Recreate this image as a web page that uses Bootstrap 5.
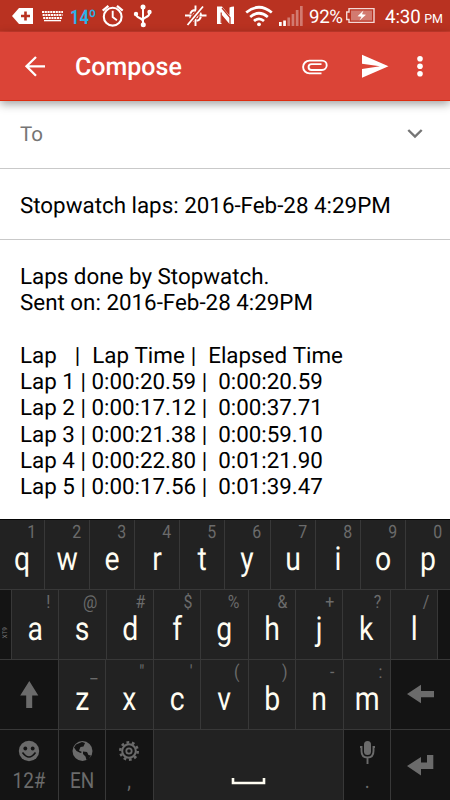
<!DOCTYPE html>
<html lang="en">
<head>
<meta charset="utf-8">
<meta name="viewport" content="width=device-width, initial-scale=1">
<title>Compose</title>
<link href="https://cdn.jsdelivr.net/npm/bootstrap@5.3.0/dist/css/bootstrap.min.css" rel="stylesheet">
<style>
body{font-family:Roboto,"Liberation Sans",sans-serif;width:450px;height:800px;color:#000;background:#fff;text-rendering:geometricPrecision}
svg{display:block;flex:none}
.status-bar{height:32px;background:#b93221;border-bottom:1px solid #c83b2c;color:#fff;font-size:18.7px;line-height:34px;white-space:nowrap}
.temp{color:#2cb1e8;font-size:20px;font-weight:700;width:33px;padding-left:8px;transform:scaleX(.82);transform-origin:8px 50%;line-height:35px}
.pct{width:38px;padding-left:7px;letter-spacing:-.35px}
.clock{padding-left:10px;letter-spacing:-.1px}
.clock small{font-size:12.5px;margin-left:-1px}
.app-bar{height:69px;background:#db4437;border-bottom:1px solid #dd2c10;color:#fff;box-shadow:0 3px 9px rgba(0,0,0,.38);z-index:1}
.app-title{font-size:25px;font-weight:500;line-height:30px;width:226px;padding:4px 0 0 27px}
.to-row{height:68px;border-bottom:1px solid #c9c9c9;color:#757575;font-size:20.5px;padding:0 25px 0 20px}
.to-row span{padding-top:2px}
.subject{height:71px;border-bottom:1px solid #c9c9c9;font-size:22.36px;padding:5px 20px 0}
.message{height:279px;font-size:22.36px;line-height:26.28px;padding:24px 20px 0;white-space:pre;overflow:hidden}
.lap-head{word-spacing:.45px}
.keyboard{height:281px;background:#222;border-top:1px solid #050505}
.krow{height:70px;border-bottom:1px solid #383838}
.krow:last-child{border:0;height:70px}
.key{flex:1 1 0;min-width:0;border-right:1px solid #383838;color:#fffdf2}
.key:last-child{border-right:0}
.fn{background:#141414;color:#6b6b6b}
.w-side{flex:0 0 12px}
.w-mod{flex:0 0 59px}
.w-del{flex:0 0 59px}
.w-one{flex:0 0 47.4px}
.hint{font-size:18.3px;line-height:26px;height:25px;color:#6b6b6b;text-align:right;padding-right:8px;transform:scaleX(.87);transform-origin:calc(100% - 8px) 50%}
.letter{font-size:33px;line-height:30px;text-align:center;transform:scaleX(.86)}
.tag{font-size:22px;line-height:28px;text-align:center;transform:scaleX(.86)}
.xt{font-size:6.5px;writing-mode:vertical-rl;transform:rotate(180deg);line-height:11px;margin-top:17px;color:#777}
</style>
<script src="https://cdn.jsdelivr.net/npm/bootstrap@5.3.0/dist/js/bootstrap.bundle.min.js"></script>
</head>
<body class="d-flex flex-column overflow-hidden">
<div class="status-bar d-flex flex-shrink-0">
  <svg width="38" height="31" viewBox="0 0 38 31"><path d="M12 16L19 8H33V24H19Z" fill="#fff"/><path d="M25.5 11.5V20.5M21 16H30" stroke="#b93221" stroke-width="2.6"/></svg>
  <svg width="24" height="31" viewBox="38 0 24 31" overflow="visible"><path d="M42 12H63M42.6 15H62.5M43.2 18H62" stroke="#fff" stroke-width="2.1" stroke-dasharray="2.1 .65"/><path d="M44 20.6H61" stroke="#fff" stroke-width="1.4"/></svg>
  <span class="temp flex-shrink-0">14º</span>
  <svg width="34" height="31" viewBox="95 0 34 31" fill="none" stroke="#fff"><circle cx="112.7" cy="16.7" r="8.9" stroke-width="2.1"/><path d="M112.7 10.8V17l4.2 3.2" stroke-width="1.9"/><path d="M102.7 10.6L108.4 5.8M117 5.8l5.7 4.8" stroke-width="2.2"/></svg>
  <svg width="50" height="31" viewBox="129 0 50 31" fill="none" stroke="#fff" stroke-width="2"><path d="M143 7V26M136 14c0 5 6.600 3 7 7.500M149.500 13c0 5-6.200 3.500-6.500 7"/><circle cx="143" cy="7" r="1.500" fill="#fff"/><circle cx="136" cy="14" r="1.200" fill="#fff"/><circle cx="149.500" cy="12" r="1.200"/><circle cx="143.300" cy="24.800" r="1.500" fill="#fff"/></svg>
  <svg width="33" height="31" viewBox="179 0 33 31" fill="none" stroke="#fff" stroke-width="1.9"><circle cx="195.500" cy="15.500" r="5.500" stroke-dasharray="6 2.640" stroke-dashoffset="-1.300"/><circle cx="195.500" cy="15.500" r="2"/><path d="M195.500 5.500V12M195.500 19V26M185 15.500H191.500M199.500 15.500H206.500"/><path d="M187 25.500L202.500 6.500" stroke="#b93221" stroke-width="4.500"/><path d="M187.500 25L203 6.500" stroke-width="1.800"/></svg>
  <svg width="28" height="31" viewBox="212 0 28 31"><path d="M217 6.500h5l7.500 9V7.500q2-1 4.500-1v17.500h-4.500l-8-9.500V24H217Z" fill="#fff"/><path d="M222 8l8 9.500V24M221.200 23V12.500" fill="none" stroke="#b93221" stroke-width="1.200"/></svg>
  <svg width="36" height="31" viewBox="240 0 36 31" fill="none" stroke="#fff" stroke-width="2.700"><path d="M246.200 12.500q12.800-10.500 25.600 0M250.200 17q8.800-7.500 17.600 0M254 21q5-4.400 10 0"/><circle cx="259" cy="24.300" r="1.900" fill="#fff" stroke="none"/></svg>
  <svg width="26" height="31" viewBox="276 0 26 31" overflow="visible"><path d="M279 22h2.700v4H279ZM283.200 20.500h2.700V26h-2.700Z" fill="#fff"/><path d="M287.400 17.500h2.700V26h-2.700ZM291.600 14h2.700v12h-2.700ZM295.800 10h2.700v16h-2.700ZM300 6h2.700v20H300Z" fill="#d27a70"/></svg>
  <span class="pct flex-shrink-0">92%</span>
  <svg width="35" height="31" viewBox="340 0 35 31"><path d="M349 8.600H374V22.400H349V19.500H346.700V12H349Z" fill="none" stroke="#f4d8d5" stroke-width="1.400"/><path d="M351 10.500H372V20.500H351Z" fill="#d27a70"/><path d="M363.500 10.500L357.500 16.200l4 .6-2 3.700 6.500-5.700-4-.5Z" fill="#fff"/></svg>
  <span class="clock">4:30 <small>PM</small></span>
</div>
<header class="app-bar d-flex align-items-center flex-shrink-0 position-relative">
  <svg width="48" height="69" viewBox="0 32 48 69" fill="none" stroke="#fff" stroke-width="2.300"><path d="M45 66.300H27M36 57L26.500 66.300L36 75.700"/></svg>
  <div class="app-title">Compose</div>
  <svg width="66" height="69" viewBox="274 32 66 69" fill="none" stroke="#fff" stroke-width="1.900"><path d="M321.500 73.400H309.500a6.400 6.400 0 0 1 0-12.800H322a4.700 4.700 0 0 1 0 9.400H311.500a2.900 2.900 0 0 1 0-5.900H321.500"/></svg>
  <svg width="60" height="69" viewBox="340 32 60 69"><path d="M362 54.800L388.500 66.300L362 77.800V69L380 66.300L362 63.800Z" fill="#fff"/></svg>
  <svg width="50" height="69" viewBox="400 32 50 69" fill="#fff"><circle cx="420" cy="58.800" r="2.800"/><circle cx="420" cy="66.300" r="2.800"/><circle cx="420" cy="73.800" r="2.800"/></svg>
</header>
<div class="to-row d-flex align-items-center justify-content-between flex-shrink-0"><span>To</span>
  <svg width="20" height="20" viewBox="405 125 20 20"><path d="M408.300 130L415 136.500L421.700 130" fill="none" stroke="#757575" stroke-width="2.400"/></svg></div>
<div class="subject d-flex align-items-center flex-shrink-0">Stopwatch laps: 2016-Feb-28 4:29PM</div>
<div class="message flex-shrink-0"><div>Laps done by Stopwatch.
Sent on: 2016-Feb-28 4:29PM

</div><div class="lap-head">Lap   |  Lap Time |  Elapsed Time</div><div>Lap 1 | 0:00:20.59 |  0:00:20.59
Lap 2 | 0:00:17.12 |  0:00:37.71
Lap 3 | 0:00:21.38 |  0:00:59.10
Lap 4 | 0:00:22.80 |  0:01:21.90
Lap 5 | 0:00:17.56 |  0:01:39.47</div></div>
<div class="keyboard flex-shrink-0">
  <div class="krow d-flex">
    <div class="key"><div class="hint">1</div><div class="letter">q</div></div>
    <div class="key"><div class="hint">2</div><div class="letter">w</div></div>
    <div class="key"><div class="hint">3</div><div class="letter">e</div></div>
    <div class="key"><div class="hint">4</div><div class="letter">r</div></div>
    <div class="key"><div class="hint">5</div><div class="letter">t</div></div>
    <div class="key"><div class="hint">6</div><div class="letter">y</div></div>
    <div class="key"><div class="hint">7</div><div class="letter">u</div></div>
    <div class="key"><div class="hint">8</div><div class="letter">i</div></div>
    <div class="key"><div class="hint">9</div><div class="letter">o</div></div>
    <div class="key"><div class="hint">0</div><div class="letter">p</div></div>
  </div>
  <div class="krow d-flex">
    <div class="key fn w-side d-flex align-items-center"><span class="xt">XT9</span></div>
    <div class="key"><div class="hint">!</div><div class="letter">a</div></div>
    <div class="key"><div class="hint">@</div><div class="letter">s</div></div>
    <div class="key"><div class="hint">#</div><div class="letter">d</div></div>
    <div class="key"><div class="hint">$</div><div class="letter">f</div></div>
    <div class="key"><div class="hint">%</div><div class="letter">g</div></div>
    <div class="key"><div class="hint">&amp;</div><div class="letter">h</div></div>
    <div class="key"><div class="hint">+</div><div class="letter">j</div></div>
    <div class="key"><div class="hint">?</div><div class="letter">k</div></div>
    <div class="key"><div class="hint">/</div><div class="letter">l</div></div>
    <div class="key fn w-side"></div>
  </div>
  <div class="krow d-flex">
    <div class="key fn w-mod"><svg width="58" height="69" viewBox="0 660 58 69"><path d="M29.300 681L38.300 695.500H32.200V708H26.200V695.500H20.200Z" fill="#6b6b6b"/></svg></div>
    <div class="key"><div class="hint">_</div><div class="letter">z</div></div>
    <div class="key"><div class="hint">"</div><div class="letter">x</div></div>
    <div class="key"><div class="hint">'</div><div class="letter">c</div></div>
    <div class="key"><div class="hint">(</div><div class="letter">v</div></div>
    <div class="key"><div class="hint">)</div><div class="letter">b</div></div>
    <div class="key"><div class="hint">-</div><div class="letter">n</div></div>
    <div class="key"><div class="hint">:</div><div class="letter">m</div></div>
    <div class="key fn w-del"><svg width="59" height="69" viewBox="391 660 59 69"><path d="M407 694L421 684.700V691H434V697.300H421V703.300Z" fill="#6b6b6b"/></svg></div>
  </div>
  <div class="krow d-flex">
    <div class="key fn w-mod"><svg width="58" height="38" viewBox="0 730 58 38"><circle cx="29" cy="751" r="10.200" fill="#6b6b6b"/><circle cx="25.300" cy="748.500" r="1.900" fill="#141414"/><circle cx="32.700" cy="748.500" r="1.900" fill="#141414"/><path d="M22.500 752.500q6.500 9 13 0" fill="none" stroke="#141414" stroke-width="1.600"/></svg><div class="tag">12#</div></div>
    <div class="key fn w-one"><svg width="46" height="38" viewBox="59 730 46 38"><circle cx="82.500" cy="751" r="10" fill="#6b6b6b"/><path d="M76 744.500l6-2.500 3 1-1.500 3.500-3 .500-1.500 3.500 3 1.500-1.500 1-4-2-2.500-3.500ZM83 751.500l4 .5 1.500 3 2.500.5-2.500 4-2 .5-1-3.500-2.500-2.500Z" fill="#141414"/></svg><div class="tag">EN</div></div>
    <div class="key fn w-one"><svg width="46" height="38" viewBox="107 730 46 38" fill="none" stroke="#6b6b6b"><circle cx="130" cy="751" r="8.700" stroke-width="2.600" stroke-dasharray="2.730 2.730"/><circle cx="130" cy="751" r="6.800" stroke-width="2"/><circle cx="130" cy="751" r="2.700" stroke-width="1.800"/></svg><div class="tag">,</div></div>
    <div class="key"><svg class="mx-auto" width="189" height="70" viewBox="154 730 189 70"><path d="M233 778V783H264V778" fill="none" stroke="#fffdf2" stroke-width="2.600"/></svg></div>
    <div class="key fn w-one"><svg width="46" height="38" viewBox="344 730 46 38" fill="none" stroke="#6b6b6b"><rect x="364" y="741" width="7" height="14" rx="3.500" fill="#6b6b6b" stroke="none"/><path d="M360 747h1.500v4q0 6.500 6 6.500t6-6.500v-4H375M367.500 757v7" stroke-width="1.900"/></svg><div class="tag">.</div></div>
    <div class="key fn w-del"><svg width="59" height="70" viewBox="391 730 59 70"><path d="M407 766L421 757V762.500H427V755H433.300V769H421V775.500Z" fill="#6b6b6b"/></svg></div>
  </div>
</div>
</body>
</html>
